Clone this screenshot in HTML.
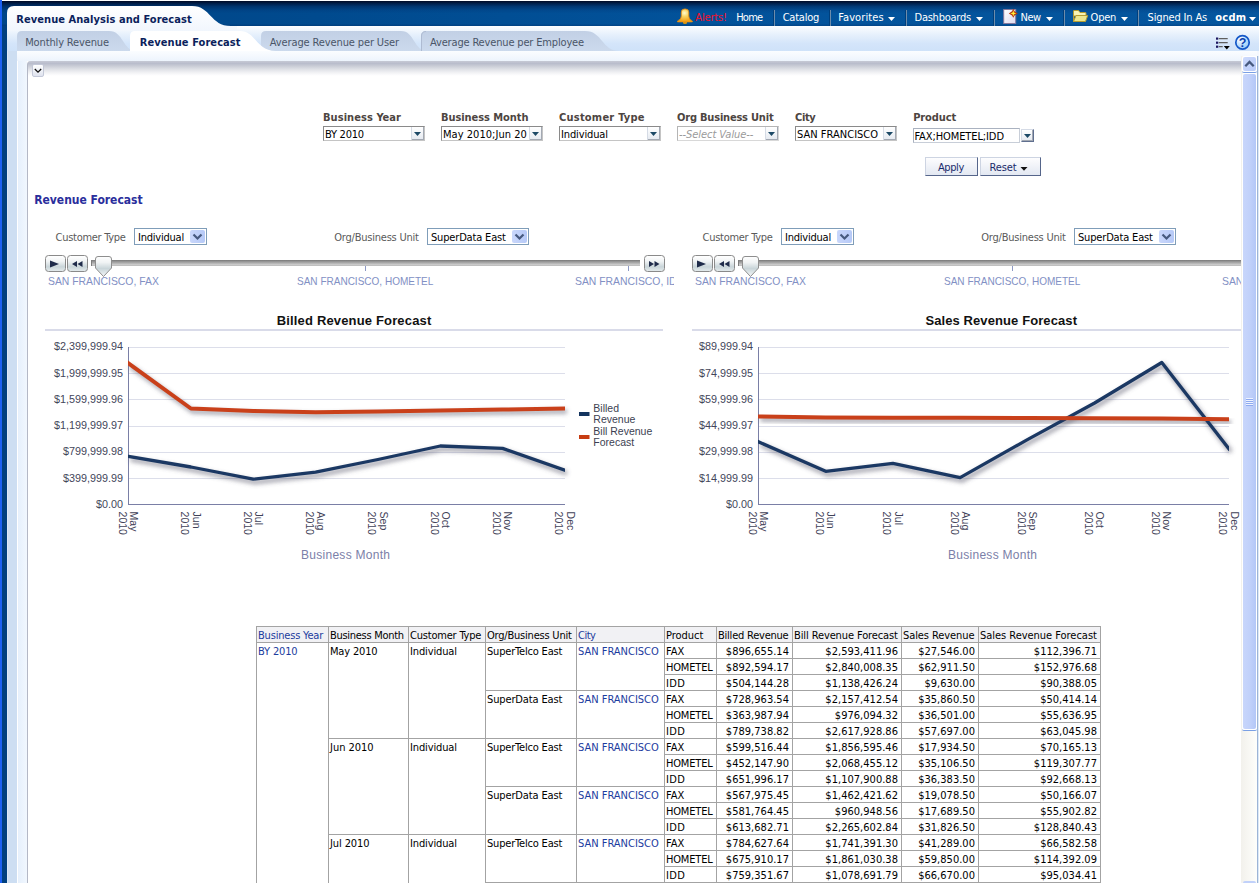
<!DOCTYPE html>
<html><head><meta charset="utf-8"><title>Revenue Analysis and Forecast</title>
<style>
*{box-sizing:border-box}
html,body{margin:0;padding:0}
body{width:1259px;height:883px;overflow:hidden;background:#fff;position:relative;font:11px "DejaVu Sans Condensed","Liberation Sans",sans-serif;color:#000}
.a{position:absolute}
.t{position:absolute;white-space:nowrap;line-height:13px;letter-spacing:-0.12px}
.ar{font-family:"Liberation Sans",sans-serif}
.nav{color:#fff;font-size:11px;top:11px}
.sep{position:absolute;top:10px;width:1px;height:16px;background:#6d8cab;box-shadow:-1px 0 0 #003f7c}
.dd{position:absolute;width:0;height:0;border-left:3.5px solid transparent;border-right:3.5px solid transparent;border-top:4px solid #fff;top:16px}
.tab{position:absolute;top:31px;height:20px}
.pl{font-weight:bold;color:#4d4541;top:111px;letter-spacing:-0.1px}
.psel{position:absolute;top:126px;height:15px;background:#fff;border:1px solid #8a8a8a;border-right-color:#c4c4c4;border-bottom-color:#c4c4c4}
.psel .tx{position:absolute;left:1px;top:1px;line-height:13px;white-space:nowrap}
.psel .bt{position:absolute;right:0;top:0;width:13px;height:13px;background:linear-gradient(#fff,#e4e9f0);border-left:1px solid #d5dbe5;box-shadow:inset -1px -1px 0 #a3a9b3}
.psel .bt svg{position:absolute;left:2px;top:5px}
.vsel{position:absolute;top:228px;height:17px;background:#fff;border:1px solid #7f9db9}
.vsel .tx{position:absolute;left:3px;top:2px;line-height:13px;white-space:nowrap;letter-spacing:-0.22px}
.vsel .bt{position:absolute;right:1px;top:1px;width:15px;height:13px;background:linear-gradient(90deg,#c9d7fb,#b6c9f7);border-radius:2px}
.vl{color:#555;top:231px}
.btn{position:absolute;top:255px;height:17px;width:21px;border:1px solid #8a8a8a;border-radius:3.5px;background:linear-gradient(#fff,#f1f4f5 35%,#c9d5d9 72%,#e3eaec)}
.tick{position:absolute;top:266px;width:1px;height:5px;background:#8d99c4}
.sl{color:#8290c4;font:10.4px "Liberation Sans",sans-serif;line-height:13px;top:275px;letter-spacing:0}
table{border-collapse:collapse;table-layout:fixed;position:absolute;left:256px;top:626px;font:11px "DejaVu Sans Condensed","Liberation Sans",sans-serif}
td{border:1px solid #a3a3a3;padding:2px 1px 0 1px;height:16px;line-height:13px;vertical-align:top;white-space:nowrap;overflow:hidden}
tr.h td{background:#f1f1f4}
td.n{text-align:right;padding-right:3px}
.lk{color:#1c3c9e}
</style></head>
<body>
<div class="a" style="left:0;top:0;width:2px;height:883px;background:#1c60f2"></div>
<div class="a" style="left:2px;top:1px;width:1257px;height:25px;background:linear-gradient(rgba(0,6,30,.95) 0,rgba(0,14,48,.72) 10%,rgba(0,22,66,.42) 22%,rgba(0,30,90,.12) 38%,rgba(0,0,0,0) 50%,rgba(0,0,0,0) 90%,rgba(0,20,70,.22) 100%),linear-gradient(90deg,#004587 0,#004a8e 25%,#02529a 55%,#05569e 100%)"></div>
<div class="a" style="left:2px;top:26px;width:5px;height:857px;background:#003f7f"></div>
<div class="a" style="left:7px;top:26px;width:1252px;height:25px;background:linear-gradient(#fff 0,#f8fbff 6%,#e6f0fc 35%,#d4e5fa 70%,#cfe2f9)"></div>
<div class="a" style="left:7px;top:51px;width:10px;height:832px;background:linear-gradient(90deg,#dce8f8 0,#dce8f8 1px,#cddef2 1px)"></div>
<div class="a" style="left:17px;top:51px;width:1242px;height:10px;background:linear-gradient(#fbfdff,#edf4fd)"></div>
<div class="a" style="left:17px;top:61px;width:10px;height:822px;background:linear-gradient(90deg,#fff 0,#fff 1px,#e6f0fc 1px,#f1f7fe)"></div>
<svg class="a" style="left:7px;top:6px" width="230" height="25" viewBox="0 0 230 25"><defs><linearGradient id="tg" x1="0" y1="0" x2="0" y2="1"><stop offset="0" stop-color="#fff"/><stop offset="1" stop-color="#f1f6fd"/></linearGradient></defs><path d="M0 25V7Q0 0 7 0H185C204 0 203 20 224 20H230V25Z" fill="url(#tg)"/></svg>
<div class="t" style="left:16.3px;top:13px;letter-spacing:0.061px;font-weight:bold;color:#0b1f5c">Revenue Analysis and Forecast</div>
<svg class="a" style="left:677px;top:8px" width="16" height="17" viewBox="0 0 16 17"><defs><radialGradient id="bg" cx=".47" cy=".32" r=".6"><stop offset="0" stop-color="#fffcd0"/><stop offset=".45" stop-color="#f9d460"/><stop offset="1" stop-color="#f2a51e"/></radialGradient></defs><path d="M6 14H10V15Q10 16 8 16Q6 16 6 15Z" fill="#d99a10"/><path d="M4.300 4Q4.300 .9 8 .9Q11.800 .9 11.800 4V8Q11.800 11.500 15.300 13V13.900H.5V13Q4.300 11.500 4.300 8Z" fill="url(#bg)" stroke="#e8890c" stroke-width=".8"/></svg>
<div class="t nav" style="left:695.3px;top:11px;letter-spacing:-0.168px;color:#f2102c">Alerts!</div>
<div class="t nav" style="left:736.2px;top:11px;letter-spacing:-0.78px;">Home</div>
<div class="t nav" style="left:782.7px;top:11px;letter-spacing:-0.237px;">Catalog</div>
<div class="t nav" style="left:838.2px;top:11px;letter-spacing:0.108px;">Favorites</div>
<div class="t nav" style="left:914.5px;top:11px;letter-spacing:-0.241px;">Dashboards</div>
<div class="t nav" style="left:1020.5px;top:11px;letter-spacing:-0.496px;">New</div>
<div class="t nav" style="left:1090.6px;top:11px;letter-spacing:-0.254px;">Open</div>
<div class="t nav" style="left:1147.6px;top:11px;letter-spacing:-0.164px;">Signed In As</div>
<div class="t nav" style="left:1215.3px;top:11px;letter-spacing:0.25px;font-weight:bold;">ocdm</div>
<div class="sep" style="left:774px"></div>
<div class="sep" style="left:830px"></div>
<div class="sep" style="left:906px"></div>
<div class="sep" style="left:994px"></div>
<div class="sep" style="left:1064px"></div>
<div class="sep" style="left:1138px"></div>
<svg class="a" style="left:888px;top:17px" width="8" height="5" viewBox="0 0 8 5"><path d="M0 0H7L3.500 4Z" fill="#fff"/></svg>
<svg class="a" style="left:976px;top:17px" width="8" height="5" viewBox="0 0 8 5"><path d="M0 0H7L3.500 4Z" fill="#fff"/></svg>
<svg class="a" style="left:1046px;top:17px" width="8" height="5" viewBox="0 0 8 5"><path d="M0 0H7L3.500 4Z" fill="#fff"/></svg>
<svg class="a" style="left:1121px;top:17px" width="8" height="5" viewBox="0 0 8 5"><path d="M0 0H7L3.500 4Z" fill="#fff"/></svg>
<svg class="a" style="left:1249px;top:17px" width="8" height="5" viewBox="0 0 8 5"><path d="M0 0H7L3.500 4Z" fill="#fff"/></svg>
<svg class="a" style="left:1003px;top:8px" width="16" height="17" viewBox="0 0 16 17"><defs><linearGradient id="ng" x1="0" y1="0" x2="1" y2="1"><stop offset="0" stop-color="#fff"/><stop offset="1" stop-color="#dcd9ee"/></linearGradient></defs><rect x=".7" y="1.500" width="12" height="14" fill="url(#ng)" stroke="#85789c" stroke-width="1"/><path d="M10.300 .8L11.600 3.200L14.800 5.400L11.600 7.600L10.300 9.800L9 7.600L5.800 5.400L9 3.200Z" fill="#b5380c"/><path d="M10.300 2.200L11 4.600L13.200 5.400L11 6.200L10.300 8.600L9.600 6.200L7.400 5.400L9.600 4.600Z" fill="#ffee3a"/></svg>
<svg class="a" style="left:1072px;top:9px" width="17" height="14" viewBox="0 0 17 14"><path d="M1.500 12.500V2Q1.500 1.500 2 1.500H6.500L8 3.500H13.500Q14 3.500 14 4V7H1.500Z" fill="#f7f3b4" stroke="#b59c30" stroke-width="1"/><path d="M1.500 12.500L4 6.500H15.700L13.500 12.500Z" fill="#ebe68e" stroke="#b59c30" stroke-width="1" stroke-linejoin="round"/></svg>
<svg class="a" style="left:17px;top:31px" width="1100" height="20" viewBox="0 0 1100 20"><defs><linearGradient id="ig" x1="0" y1="0" x2="0" y2="1"><stop offset="0" stop-color="#c2d0e5"/><stop offset="1" stop-color="#ccdaed"/></linearGradient></defs><path d="M0 20V5Q0 0 5 0H92C107 0 105 20 120 20Z" fill="url(#ig)"/><path d="M244 20V5Q244 0 249 0H384C398 0 396 20 411 20Z" fill="url(#ig)"/><path d="M404 20V5Q404 0 409 0H568C586 0 584 20 603 20Z" fill="url(#ig)"/><path d="M404.500 20V5Q404.500 .5 409 .5" fill="none" stroke="#aebbd2" stroke-width="1"/><path d="M113 20V5Q113 0 118 0H223C239 0 239 20 259 20Z" fill="#fff"/></svg>
<div class="t" style="left:25.2px;top:36px;letter-spacing:-0.138px;color:#4a5568">Monthly Revenue</div>
<div class="t" style="left:139.8px;top:36px;letter-spacing:0.074px;font-weight:bold;color:#0b1f5c">Revenue Forecast</div>
<div class="t" style="left:269.8px;top:36px;letter-spacing:-0.121px;color:#4a5568">Average Revenue per User</div>
<div class="t" style="left:430px;top:36px;letter-spacing:-0.164px;color:#4a5568">Average Revenue per Employee</div>
<svg class="a" style="left:1215px;top:36px" width="16" height="15" viewBox="0 0 16 15"><g stroke="#5f5f5f" stroke-width="1.3"><path d="M3.700 2.600H12.700M3.700 6.700H12.700M3.700 10.700H7.700"/></g><g fill="#1c1660"><rect x="1" y="1.500" width="2.200" height="2.200"/><rect x="1" y="5.600" width="2.200" height="2.200"/><rect x="1" y="9.600" width="2.200" height="2.200"/></g><path d="M8.800 10H14.800L11.800 13.600Z" fill="#000"/></svg>
<svg class="a" style="left:1234px;top:34px" width="17" height="17" viewBox="0 0 17 17"><defs><radialGradient id="hg" cx=".32" cy=".28" r=".85"><stop offset="0" stop-color="#fff"/><stop offset=".45" stop-color="#c4e2fd"/><stop offset="1" stop-color="#8cc4f8"/></radialGradient></defs><circle cx="8.500" cy="8.400" r="6.700" fill="url(#hg)" stroke="#1457c8" stroke-width="1.700"/><text x="8.600" y="12.800" text-anchor="middle" font-family="Liberation Sans,sans-serif" font-weight="bold" font-size="12.500" fill="#0a3fae">?</text></svg>
<div class="a" style="left:27px;top:61px;width:1214px;height:822px;background:linear-gradient(#c6c9d5 0,#b9bdcc 2.5px,#c9ccd6 5px,#dddfe5 8px,#eeeff2 11px,#fcfcfd 14px,#fff 15px);border-left:1px solid #b4b8c6;border-top-left-radius:4px"></div>
<div class="a" style="left:32px;top:64px;width:12px;height:13px;border-radius:2px;background:linear-gradient(#fff,#dfe3ee);border:1px solid #c3c8d8"></div>
<svg class="a" style="left:34px;top:68px" width="8" height="6" viewBox="0 0 8 6"><path d="M.8 1L4 4.2L7.2 1" stroke="#111" stroke-width="1.3" fill="none"/></svg>
<div class="a" style="left:1241px;top:56px;width:16px;height:827px;background:linear-gradient(90deg,#f2f1ec,#fefefb)"></div>
<div class="a" style="left:1257px;top:51px;width:2px;height:5px;background:#f4f8fe"></div>
<div class="a" style="left:1257px;top:56px;width:2px;height:827px;background:linear-gradient(90deg,#9db4d6 0,#9db4d6 50%,#dce9f7 50%)"></div>
<div class="a" style="left:1242px;top:56px;width:15px;height:17px;background:#fff;border-radius:2px;border-bottom:1px solid #7aa0e4"></div>
<div class="a" style="left:1243px;top:57px;width:13px;height:14px;border-radius:2px;background:linear-gradient(135deg,#cddafc,#b8caf8)"></div>
<svg class="a" style="left:1244px;top:60px" width="11" height="8" viewBox="0 0 11 8"><path d="M1.300 6.200L5.500 2L9.700 6.200" stroke="#46597e" stroke-width="2.300" fill="none"/></svg>
<div class="a" style="left:1242px;top:73px;width:15px;height:658px;background:#fff;border-radius:2px;border-bottom:1px solid #7aa0e4"></div>
<div class="a" style="left:1243px;top:74px;width:13px;height:655px;border-radius:2px;background:linear-gradient(90deg,#c8d6fb,#c1d1fa 50%,#b3c7f7)"></div>
<div class="a" style="left:1246px;top:398px;width:7px;height:8px;background:repeating-linear-gradient(#eef3ff 0,#eef3ff 1px,#8eaaf0 1px,#8eaaf0 2px)"></div>
<div class="a" style="left:1243px;top:881px;width:13px;height:2px;background:#c1d1fa;border-radius:2px 2px 0 0"></div>
<div class="t" style="left:323px;top:111px;letter-spacing:0.058px;font-weight:bold;color:#4d4541">Business Year</div>
<div class="psel" style="left:323px;width:102px"><div class="tx" style="letter-spacing:-0.259px">BY 2010</div><div class="bt"><svg width="8" height="5" viewBox="0 0 8 5"><path d="M0 0H7L3.500 4Z" fill="#1c4966"/></svg></div></div>
<div class="t" style="left:441px;top:111px;letter-spacing:-0.068px;font-weight:bold;color:#4d4541">Business Month</div>
<div class="psel" style="left:441px;width:102px"><div class="tx" style="letter-spacing:0.035px">May 2010;Jun 20</div><div class="bt"><svg width="8" height="5" viewBox="0 0 8 5"><path d="M0 0H7L3.500 4Z" fill="#1c4966"/></svg></div></div>
<div class="t" style="left:559px;top:111px;letter-spacing:0.228px;font-weight:bold;color:#4d4541">Customer Type</div>
<div class="psel" style="left:559px;width:102px"><div class="tx" style="letter-spacing:-0.128px">Individual</div><div class="bt"><svg width="8" height="5" viewBox="0 0 8 5"><path d="M0 0H7L3.500 4Z" fill="#1c4966"/></svg></div></div>
<div class="t" style="left:677px;top:111px;letter-spacing:-0.203px;font-weight:bold;color:#4d4541">Org Business Unit</div>
<div class="psel" style="left:677px;width:102px;border-color:#b5b5b5 #d8d8d8 #d8d8d8 #b5b5b5"><div class="tx" style="font-style:italic;color:#9a9a9a;letter-spacing:-0.052px">--Select Value--</div><div class="bt"><svg width="8" height="5" viewBox="0 0 8 5"><path d="M0 0H7L3.500 4Z" fill="#1c4966"/></svg></div></div>
<div class="t" style="left:795px;top:111px;letter-spacing:-0.361px;font-weight:bold;color:#4d4541">City</div>
<div class="psel" style="left:795px;width:102px"><div class="tx" style="letter-spacing:0.015px">SAN FRANCISCO</div><div class="bt"><svg width="8" height="5" viewBox="0 0 8 5"><path d="M0 0H7L3.500 4Z" fill="#1c4966"/></svg></div></div>
<div class="t" style="left:913.2px;top:111px;letter-spacing:-0.122px;font-weight:bold;color:#4d4541">Product</div>
<div class="psel" style="left:913px;top:128px;width:107px;height:15px;border-color:#aab2c0 #c8ced8 #c8ced8 #aab2c0"><div class="tx" style="left:0.5px;letter-spacing:-0.098px">FAX;HOMETEL;IDD</div></div>
<div class="psel" style="left:1021px;top:129px;width:13px;height:13px;border:1px solid;border-color:#d5dbe6 #5f6f8f #5f6f8f #d5dbe6"><div class="bt" style="width:11px;height:11px;border:0"><svg style="left:2px;top:4px" width="8" height="5" viewBox="0 0 8 5"><path d="M0 0H7L3.500 4Z" fill="#1c4966"/></svg></div></div>
<div class="a" style="left:925px;top:157px;width:53px;height:19px;background:linear-gradient(#fdfdfe,#e3e8f2);border:1px solid #cdd4e2;border-right-color:#55658a;border-bottom-color:#55658a"></div>
<div class="t" style="left:938px;top:161px;letter-spacing:-0.421px;color:#1a2b6b">Apply</div>
<div class="a" style="left:980px;top:157px;width:61px;height:19px;background:linear-gradient(#fdfdfe,#e3e8f2);border:1px solid #cdd4e2;border-right-color:#55658a;border-bottom-color:#55658a"></div>
<div class="t" style="left:989.5px;top:161px;letter-spacing:-0.105px;color:#1a2b6b">Reset</div>
<svg class="a" style="left:1020px;top:167px" width="9" height="5" viewBox="0 0 9 5"><path d="M.5 0H7.500L4 3.800Z" fill="#111"/></svg>
<div class="t" style="left:34.2px;top:193px;letter-spacing:-0.015px;font-weight:bold;font-size:12px;line-height:15px;color:#2a2e9c">Revenue Forecast</div>
<div class="a" style="left:45px;top:220px;width:630px;height:360px;overflow:hidden">
<div class="t" style="left:10.6px;top:11px;letter-spacing:-0.29px;color:#5a5a5a">Customer Type</div>
<div class="vsel" style="left:89px;top:8px;width:73px"><div class="tx" style="letter-spacing:-0.228px">Individual</div><div class="bt"></div><svg class="a" style="right:3px;top:4px" width="11" height="8" viewBox="0 0 11 8"><path d="M1.500 1.500L5.500 5.500L9.500 1.500" stroke="#46597e" stroke-width="2.200" fill="none"/></svg></div>
<div class="t" style="left:289.3px;top:11px;letter-spacing:-0.227px;color:#5a5a5a">Org/Business Unit</div>
<div class="vsel" style="left:382px;top:8px;width:102px"><div class="tx" style="letter-spacing:-0.172px">SuperData East</div><div class="bt"></div><svg class="a" style="right:3px;top:4px" width="11" height="8" viewBox="0 0 11 8"><path d="M1.500 1.500L5.500 5.500L9.500 1.500" stroke="#46597e" stroke-width="2.200" fill="none"/></svg></div>
<div class="btn" style="left:0px;top:35px"></div><svg class="a" style="left:5px;top:40px" width="10" height="8" viewBox="0 0 10 8"><path d="M0 .5L9 4L0 7.5Z" fill="#1f2b4a"/></svg>
<div class="btn" style="left:22px;top:35px"></div><svg class="a" style="left:27px;top:41px" width="11" height="6" viewBox="0 0 11 6"><path d="M5 0V6L0 3ZM10.5 0V6L5.5 3Z" fill="#1f2b4a"/></svg>
<div class="a" style="left:46px;top:40px;width:549px;height:6px;background:linear-gradient(#777 0,#8e8e8e 18%,#a9a9a9 45%,#cfcfcf 80%,#b5b5b5);border-left:1px solid #7d7d7d"></div>
<div class="btn" style="left:599px;top:35px"></div><svg class="a" style="left:604px;top:41px" width="11" height="6" viewBox="0 0 11 6"><path d="M0 0V6L5 3ZM5.5 0V6L10.5 3Z" fill="#1f2b4a"/></svg>
<svg class="a" style="left:49px;top:35px" width="20" height="23" viewBox="0 0 20 23"><defs><linearGradient id="th45" x1="0" y1="0" x2="0" y2="1"><stop offset="0" stop-color="#fff"/><stop offset=".3" stop-color="#f0f3f4"/><stop offset=".6" stop-color="#c9d5d9"/><stop offset="1" stop-color="#f4f7f8"/></linearGradient></defs><path d="M1.5 4Q1.5 1.5 4 1.5H15Q17.500 1.5 17.500 4V13L9.500 21.500L1.5 13Z" fill="url(#th45)" stroke="#8e8e8e" stroke-width="1"/></svg>
<div class="tick" style="left:320px;top:46px"></div>
<div class="tick" style="left:583px;top:46px"></div>
<div class="t sl" style="left:3px;top:55px;font-size:10.4px">SAN FRANCISCO, FAX</div>
<div class="t sl" style="left:252px;top:55px;font-size:10.03px">SAN FRANCISCO, HOMETEL</div>
<div class="a" style="left:530px;top:55px;width:99px;height:14px;overflow:hidden"><div class="t sl" style="left:0;top:0;font-size:10.4px">SAN FRANCISCO, IDD</div></div>
</div>
<div class="a" style="left:692px;top:220px;width:549px;height:360px;overflow:hidden">
<div class="t" style="left:10.6px;top:11px;letter-spacing:-0.29px;color:#5a5a5a">Customer Type</div>
<div class="vsel" style="left:89px;top:8px;width:73px"><div class="tx" style="letter-spacing:-0.228px">Individual</div><div class="bt"></div><svg class="a" style="right:3px;top:4px" width="11" height="8" viewBox="0 0 11 8"><path d="M1.500 1.500L5.500 5.500L9.500 1.500" stroke="#46597e" stroke-width="2.200" fill="none"/></svg></div>
<div class="t" style="left:289.3px;top:11px;letter-spacing:-0.227px;color:#5a5a5a">Org/Business Unit</div>
<div class="vsel" style="left:382px;top:8px;width:102px"><div class="tx" style="letter-spacing:-0.172px">SuperData East</div><div class="bt"></div><svg class="a" style="right:3px;top:4px" width="11" height="8" viewBox="0 0 11 8"><path d="M1.500 1.500L5.500 5.500L9.500 1.500" stroke="#46597e" stroke-width="2.200" fill="none"/></svg></div>
<div class="btn" style="left:0px;top:35px"></div><svg class="a" style="left:5px;top:40px" width="10" height="8" viewBox="0 0 10 8"><path d="M0 .5L9 4L0 7.5Z" fill="#1f2b4a"/></svg>
<div class="btn" style="left:22px;top:35px"></div><svg class="a" style="left:27px;top:41px" width="11" height="6" viewBox="0 0 11 6"><path d="M5 0V6L0 3ZM10.5 0V6L5.5 3Z" fill="#1f2b4a"/></svg>
<div class="a" style="left:46px;top:40px;width:549px;height:6px;background:linear-gradient(#777 0,#8e8e8e 18%,#a9a9a9 45%,#cfcfcf 80%,#b5b5b5);border-left:1px solid #7d7d7d"></div>
<div class="btn" style="left:599px;top:35px"></div><svg class="a" style="left:604px;top:41px" width="11" height="6" viewBox="0 0 11 6"><path d="M0 0V6L5 3ZM5.5 0V6L10.5 3Z" fill="#1f2b4a"/></svg>
<svg class="a" style="left:49px;top:35px" width="20" height="23" viewBox="0 0 20 23"><defs><linearGradient id="th692" x1="0" y1="0" x2="0" y2="1"><stop offset="0" stop-color="#fff"/><stop offset=".3" stop-color="#f0f3f4"/><stop offset=".6" stop-color="#c9d5d9"/><stop offset="1" stop-color="#f4f7f8"/></linearGradient></defs><path d="M1.5 4Q1.5 1.5 4 1.5H15Q17.500 1.5 17.500 4V13L9.500 21.500L1.5 13Z" fill="url(#th692)" stroke="#8e8e8e" stroke-width="1"/></svg>
<div class="tick" style="left:320px;top:46px"></div>
<div class="tick" style="left:583px;top:46px"></div>
<div class="t sl" style="left:3px;top:55px;font-size:10.4px">SAN FRANCISCO, FAX</div>
<div class="t sl" style="left:252px;top:55px;font-size:10.03px">SAN FRANCISCO, HOMETEL</div>
<div class="a" style="left:530px;top:55px;width:99px;height:14px;overflow:hidden"><div class="t sl" style="left:0;top:0;font-size:10.4px">SAN FRANCISCO, IDD</div></div>
</div>
<svg class="a" style="left:45px;top:305px" width="630" height="275" viewBox="0 0 630 275" font-family="Liberation Sans,sans-serif"><defs><filter id="sh45" x="-5%" y="-20%" width="110%" height="150%"><feGaussianBlur stdDeviation="2.1"/></filter><clipPath id="cp45"><rect x="83" y="30" width="437" height="180"/></clipPath></defs><text x="309" y="19.5" font-size="13" font-weight="bold" fill="#111" text-anchor="middle" textLength="154.5" lengthAdjust="spacing">Billed Revenue Forecast</text><rect x="0" y="24" width="618" height="2" fill="#d9dbe9"/><rect x="83" y="42" width="437" height="1" fill="#dcdeea"/><text x="78.1" y="45.2" font-size="10.8" fill="#43465a" text-anchor="end">$2,399,999.94</text><rect x="83" y="68" width="437" height="1" fill="#dcdeea"/><text x="78.1" y="72.0" font-size="10.8" fill="#43465a" text-anchor="end">$1,999,999.95</text><rect x="83" y="94" width="437" height="1" fill="#dcdeea"/><text x="78.1" y="97.8" font-size="10.8" fill="#43465a" text-anchor="end">$1,599,999.96</text><rect x="83" y="121" width="437" height="1" fill="#dcdeea"/><text x="78.1" y="124.2" font-size="10.8" fill="#43465a" text-anchor="end">$1,199,999.97</text><rect x="83" y="147" width="437" height="1" fill="#dcdeea"/><text x="78.1" y="150.2" font-size="10.8" fill="#43465a" text-anchor="end">$799,999.98</text><rect x="83" y="173" width="437" height="1" fill="#dcdeea"/><text x="78.1" y="177.0" font-size="10.8" fill="#43465a" text-anchor="end">$399,999.99</text><rect x="83" y="199" width="437" height="1" fill="#7a7fa6"/><text x="78.1" y="203.2" font-size="10.8" fill="#43465a" text-anchor="end">$0.00</text><rect x="83" y="42" width="1" height="158" fill="#7a7fa6"/><polyline points="85.5,61.4 147.9,106.5 210.2,109.0 272.6,110.3 334.9,109.5 397.3,108.5 459.6,107.5 522.0,106.5" fill="none" stroke="#55556a" stroke-opacity=".5" stroke-width="4.6" filter="url(#sh45)"/><polyline points="85.5,154.4 147.9,165.0 210.2,177.2 272.6,170.2 334.9,157.5 397.3,144.0 459.6,146.4 522.0,168.3" fill="none" stroke="#55556a" stroke-opacity=".5" stroke-width="4.6" filter="url(#sh45)"/><polyline points="83.5,151.4 145.9,162.0 208.2,174.2 270.6,167.2 332.9,154.5 395.3,141.0 457.6,143.4 520.0,165.3" fill="none" stroke="#1b3863" stroke-width="3.3" stroke-linejoin="round" stroke-linecap="square" clip-path="url(#cp45)"/><polyline points="83.5,58.4 145.9,103.5 208.2,106.0 270.6,107.3 332.9,106.5 395.3,105.5 457.6,104.5 520.0,103.5" fill="none" stroke="#c9401a" stroke-width="4" stroke-linejoin="round" stroke-linecap="square" clip-path="url(#cp45)"/><text transform="translate(85.1,206.60000000000002) rotate(90)" font-size="10.5" fill="#3f4258"><tspan x="0" y="0">May</tspan><tspan x="0" y="11.2">2010</tspan></text><text transform="translate(147.5,206.60000000000002) rotate(90)" font-size="10.5" fill="#3f4258"><tspan x="0" y="0">Jun</tspan><tspan x="0" y="11.2">2010</tspan></text><text transform="translate(209.8,206.60000000000002) rotate(90)" font-size="10.5" fill="#3f4258"><tspan x="0" y="0">Jul</tspan><tspan x="0" y="11.2">2010</tspan></text><text transform="translate(272.2,206.60000000000002) rotate(90)" font-size="10.5" fill="#3f4258"><tspan x="0" y="0">Aug</tspan><tspan x="0" y="11.2">2010</tspan></text><text transform="translate(334.5,206.60000000000002) rotate(90)" font-size="10.5" fill="#3f4258"><tspan x="0" y="0">Sep</tspan><tspan x="0" y="11.2">2010</tspan></text><text transform="translate(396.9,206.60000000000002) rotate(90)" font-size="10.5" fill="#3f4258"><tspan x="0" y="0">Oct</tspan><tspan x="0" y="11.2">2010</tspan></text><text transform="translate(459.2,206.60000000000002) rotate(90)" font-size="10.5" fill="#3f4258"><tspan x="0" y="0">Nov</tspan><tspan x="0" y="11.2">2010</tspan></text><text transform="translate(521.6,206.60000000000002) rotate(90)" font-size="10.5" fill="#3f4258"><tspan x="0" y="0">Dec</tspan><tspan x="0" y="11.2">2010</tspan></text><text x="300.5" y="253.5" font-size="12" fill="#7b80a8" text-anchor="middle" textLength="89" lengthAdjust="spacing">Business Month</text><rect x="534" y="107" width="10.5" height="4" fill="#14345f"/><rect x="534" y="130" width="10.5" height="4" fill="#c73c12"/><text font-size="10.5" fill="#3c3f52"><tspan x="548.3" y="106.5">Billed</tspan><tspan x="548.3" y="117.5">Revenue</tspan><tspan x="548.3" y="129.5">Bill Revenue</tspan><tspan x="548.3" y="140.5">Forecast</tspan></text></svg>
<svg class="a" style="left:692px;top:305px" width="549" height="275" viewBox="0 0 549 275" font-family="Liberation Sans,sans-serif"><defs><filter id="sh692" x="-5%" y="-20%" width="110%" height="150%"><feGaussianBlur stdDeviation="2.1"/></filter><clipPath id="cp692"><rect x="66" y="30" width="471" height="180"/></clipPath></defs><text x="309.20000000000005" y="19.5" font-size="13" font-weight="bold" fill="#111" text-anchor="middle" textLength="151.6" lengthAdjust="spacing">Sales Revenue Forecast</text><rect x="0" y="24" width="549" height="2" fill="#d9dbe9"/><rect x="66" y="42" width="471" height="1" fill="#dcdeea"/><text x="61.1" y="45.2" font-size="10.8" fill="#43465a" text-anchor="end">$89,999.94</text><rect x="66" y="68" width="471" height="1" fill="#dcdeea"/><text x="61.1" y="72.0" font-size="10.8" fill="#43465a" text-anchor="end">$74,999.95</text><rect x="66" y="94" width="471" height="1" fill="#dcdeea"/><text x="61.1" y="97.8" font-size="10.8" fill="#43465a" text-anchor="end">$59,999.96</text><rect x="66" y="121" width="471" height="1" fill="#dcdeea"/><text x="61.1" y="124.2" font-size="10.8" fill="#43465a" text-anchor="end">$44,999.97</text><rect x="66" y="147" width="471" height="1" fill="#dcdeea"/><text x="61.1" y="150.2" font-size="10.8" fill="#43465a" text-anchor="end">$29,999.98</text><rect x="66" y="173" width="471" height="1" fill="#dcdeea"/><text x="61.1" y="177.0" font-size="10.8" fill="#43465a" text-anchor="end">$14,999.99</text><rect x="66" y="199" width="471" height="1" fill="#7a7fa6"/><text x="61.1" y="203.2" font-size="10.8" fill="#43465a" text-anchor="end">$0.00</text><rect x="66" y="42" width="1" height="158" fill="#7a7fa6"/><polyline points="68.5,114.4 135.7,115.5 202.9,115.7 270.1,115.8 337.4,116.0 404.6,116.2 471.8,116.4 539.0,117.3" fill="none" stroke="#55556a" stroke-opacity=".5" stroke-width="4.6" filter="url(#sh692)"/><polyline points="68.5,139.8 135.7,169.3 202.9,161.3 270.1,175.6 337.4,137.6 404.6,101.0 471.8,60.5 539.0,147.0" fill="none" stroke="#55556a" stroke-opacity=".5" stroke-width="4.6" filter="url(#sh692)"/><polyline points="66.5,136.8 133.7,166.3 200.9,158.3 268.1,172.6 335.4,134.6 402.6,98.0 469.8,57.5 537.0,144.0" fill="none" stroke="#1b3863" stroke-width="3.3" stroke-linejoin="round" stroke-linecap="square" clip-path="url(#cp692)"/><polyline points="66.5,111.4 133.7,112.5 200.9,112.7 268.1,112.8 335.4,113.0 402.6,113.2 469.8,113.4 537.0,114.3" fill="none" stroke="#c9401a" stroke-width="4" stroke-linejoin="round" stroke-linecap="square" clip-path="url(#cp692)"/><text transform="translate(68.1,206.60000000000002) rotate(90)" font-size="10.5" fill="#3f4258"><tspan x="0" y="0">May</tspan><tspan x="0" y="11.2">2010</tspan></text><text transform="translate(135.3,206.60000000000002) rotate(90)" font-size="10.5" fill="#3f4258"><tspan x="0" y="0">Jun</tspan><tspan x="0" y="11.2">2010</tspan></text><text transform="translate(202.5,206.60000000000002) rotate(90)" font-size="10.5" fill="#3f4258"><tspan x="0" y="0">Jul</tspan><tspan x="0" y="11.2">2010</tspan></text><text transform="translate(269.7,206.60000000000002) rotate(90)" font-size="10.5" fill="#3f4258"><tspan x="0" y="0">Aug</tspan><tspan x="0" y="11.2">2010</tspan></text><text transform="translate(337.0,206.60000000000002) rotate(90)" font-size="10.5" fill="#3f4258"><tspan x="0" y="0">Sep</tspan><tspan x="0" y="11.2">2010</tspan></text><text transform="translate(404.2,206.60000000000002) rotate(90)" font-size="10.5" fill="#3f4258"><tspan x="0" y="0">Oct</tspan><tspan x="0" y="11.2">2010</tspan></text><text transform="translate(471.4,206.60000000000002) rotate(90)" font-size="10.5" fill="#3f4258"><tspan x="0" y="0">Nov</tspan><tspan x="0" y="11.2">2010</tspan></text><text transform="translate(538.6,206.60000000000002) rotate(90)" font-size="10.5" fill="#3f4258"><tspan x="0" y="0">Dec</tspan><tspan x="0" y="11.2">2010</tspan></text><text x="300.5" y="253.5" font-size="12" fill="#7b80a8" text-anchor="middle" textLength="89" lengthAdjust="spacing">Business Month</text></svg>
<table><colgroup><col style="width:72px"><col style="width:80px"><col style="width:77px"><col style="width:91px"><col style="width:88px"><col style="width:52px"><col style="width:76px"><col style="width:109px"><col style="width:77px"><col style="width:122px"></colgroup><tr class="h"><td class=lk><span style="letter-spacing:-0.194px">Business Year</span></td><td><span style="letter-spacing:-0.287px">Business Month</span></td><td><span style="letter-spacing:-0.198px">Customer Type</span></td><td><span style="letter-spacing:-0.209px">Org/Business Unit</span></td><td class=lk><span style="letter-spacing:-0.514px">City</span></td><td><span style="letter-spacing:-0.042px">Product</span></td><td><span style="letter-spacing:-0.225px">Billed Revenue</span></td><td><span style="letter-spacing:-0.11px">Bill Revenue Forecast</span></td><td><span style="letter-spacing:-0.079px">Sales Revenue</span></td><td><span style="letter-spacing:-0.029px">Sales Revenue Forecast</span></td></tr><tr><td class="lk" rowspan="15" style="border-bottom:none"><span style="letter-spacing:-0.159px">BY 2010</span></td><td rowspan="6"><span style="letter-spacing:-0.169px">May 2010</span></td><td rowspan="6"><span style="letter-spacing:-0.139px">Individual</span></td><td rowspan="3"><span style="letter-spacing:-0.187px">SuperTelco East</span></td><td class="lk" rowspan="3"><span style="letter-spacing:-0.01px">SAN FRANCISCO</span></td><td><span style="letter-spacing:0.024px">FAX</span></td><td class="n"><span style="letter-spacing:0.02px">$896,655.14</span></td><td class="n"><span style="letter-spacing:0.02px">$2,593,411.96</span></td><td class="n"><span style="letter-spacing:0.02px">$27,546.00</span></td><td class="n"><span style="letter-spacing:0.02px">$112,396.71</span></td></tr><tr><td><span style="letter-spacing:-0.186px">HOMETEL</span></td><td class="n"><span style="letter-spacing:0.02px">$892,594.17</span></td><td class="n"><span style="letter-spacing:0.02px">$2,840,008.35</span></td><td class="n"><span style="letter-spacing:0.02px">$62,911.50</span></td><td class="n"><span style="letter-spacing:0.02px">$152,976.68</span></td></tr><tr><td><span style="letter-spacing:0.331px">IDD</span></td><td class="n"><span style="letter-spacing:0.02px">$504,144.28</span></td><td class="n"><span style="letter-spacing:0.02px">$1,138,426.24</span></td><td class="n"><span style="letter-spacing:0.02px">$9,630.00</span></td><td class="n"><span style="letter-spacing:0.02px">$90,388.05</span></td></tr><tr><td rowspan="3"><span style="letter-spacing:-0.134px">SuperData East</span></td><td class="lk" rowspan="3"><span style="letter-spacing:-0.01px">SAN FRANCISCO</span></td><td><span style="letter-spacing:0.024px">FAX</span></td><td class="n"><span style="letter-spacing:0.02px">$728,963.54</span></td><td class="n"><span style="letter-spacing:0.02px">$2,157,412.54</span></td><td class="n"><span style="letter-spacing:0.02px">$35,860.50</span></td><td class="n"><span style="letter-spacing:0.02px">$50,414.14</span></td></tr><tr><td><span style="letter-spacing:-0.186px">HOMETEL</span></td><td class="n"><span style="letter-spacing:0.02px">$363,987.94</span></td><td class="n"><span style="letter-spacing:0.02px">$976,094.32</span></td><td class="n"><span style="letter-spacing:0.02px">$36,501.00</span></td><td class="n"><span style="letter-spacing:0.02px">$55,636.95</span></td></tr><tr><td><span style="letter-spacing:0.331px">IDD</span></td><td class="n"><span style="letter-spacing:0.02px">$789,738.82</span></td><td class="n"><span style="letter-spacing:0.02px">$2,617,928.86</span></td><td class="n"><span style="letter-spacing:0.02px">$57,697.00</span></td><td class="n"><span style="letter-spacing:0.02px">$63,045.98</span></td></tr><tr><td rowspan="6"><span style="letter-spacing:-0.027px">Jun 2010</span></td><td rowspan="6"><span style="letter-spacing:-0.139px">Individual</span></td><td rowspan="3"><span style="letter-spacing:-0.187px">SuperTelco East</span></td><td class="lk" rowspan="3"><span style="letter-spacing:-0.01px">SAN FRANCISCO</span></td><td><span style="letter-spacing:0.024px">FAX</span></td><td class="n"><span style="letter-spacing:0.02px">$599,516.44</span></td><td class="n"><span style="letter-spacing:0.02px">$1,856,595.46</span></td><td class="n"><span style="letter-spacing:0.02px">$17,934.50</span></td><td class="n"><span style="letter-spacing:0.02px">$70,165.13</span></td></tr><tr><td><span style="letter-spacing:-0.186px">HOMETEL</span></td><td class="n"><span style="letter-spacing:0.02px">$452,147.90</span></td><td class="n"><span style="letter-spacing:0.02px">$2,068,455.12</span></td><td class="n"><span style="letter-spacing:0.02px">$35,106.50</span></td><td class="n"><span style="letter-spacing:0.02px">$119,307.77</span></td></tr><tr><td><span style="letter-spacing:0.331px">IDD</span></td><td class="n"><span style="letter-spacing:0.02px">$651,996.17</span></td><td class="n"><span style="letter-spacing:0.02px">$1,107,900.88</span></td><td class="n"><span style="letter-spacing:0.02px">$36,383.50</span></td><td class="n"><span style="letter-spacing:0.02px">$92,668.13</span></td></tr><tr><td rowspan="3"><span style="letter-spacing:-0.134px">SuperData East</span></td><td class="lk" rowspan="3"><span style="letter-spacing:-0.01px">SAN FRANCISCO</span></td><td><span style="letter-spacing:0.024px">FAX</span></td><td class="n"><span style="letter-spacing:0.02px">$567,975.45</span></td><td class="n"><span style="letter-spacing:0.02px">$1,462,421.62</span></td><td class="n"><span style="letter-spacing:0.02px">$19,078.50</span></td><td class="n"><span style="letter-spacing:0.02px">$50,166.07</span></td></tr><tr><td><span style="letter-spacing:-0.186px">HOMETEL</span></td><td class="n"><span style="letter-spacing:0.02px">$581,764.45</span></td><td class="n"><span style="letter-spacing:0.02px">$960,948.56</span></td><td class="n"><span style="letter-spacing:0.02px">$17,689.50</span></td><td class="n"><span style="letter-spacing:0.02px">$55,902.82</span></td></tr><tr><td><span style="letter-spacing:0.331px">IDD</span></td><td class="n"><span style="letter-spacing:0.02px">$613,682.71</span></td><td class="n"><span style="letter-spacing:0.02px">$2,265,602.84</span></td><td class="n"><span style="letter-spacing:0.02px">$31,826.50</span></td><td class="n"><span style="letter-spacing:0.02px">$128,840.43</span></td></tr><tr><td rowspan="3" style="border-bottom:none"><span style="letter-spacing:-0.11px">Jul 2010</span></td><td rowspan="3" style="border-bottom:none"><span style="letter-spacing:-0.139px">Individual</span></td><td rowspan="3"><span style="letter-spacing:-0.187px">SuperTelco East</span></td><td class="lk" rowspan="3"><span style="letter-spacing:-0.01px">SAN FRANCISCO</span></td><td><span style="letter-spacing:0.024px">FAX</span></td><td class="n"><span style="letter-spacing:0.02px">$784,627.64</span></td><td class="n"><span style="letter-spacing:0.02px">$1,741,391.30</span></td><td class="n"><span style="letter-spacing:0.02px">$41,289.00</span></td><td class="n"><span style="letter-spacing:0.02px">$66,582.58</span></td></tr><tr><td><span style="letter-spacing:-0.186px">HOMETEL</span></td><td class="n"><span style="letter-spacing:0.02px">$675,910.17</span></td><td class="n"><span style="letter-spacing:0.02px">$1,861,030.38</span></td><td class="n"><span style="letter-spacing:0.02px">$59,850.00</span></td><td class="n"><span style="letter-spacing:0.02px">$114,392.09</span></td></tr><tr><td><span style="letter-spacing:0.331px">IDD</span></td><td class="n"><span style="letter-spacing:0.02px">$759,351.67</span></td><td class="n"><span style="letter-spacing:0.02px">$1,078,691.79</span></td><td class="n"><span style="letter-spacing:0.02px">$66,670.00</span></td><td class="n"><span style="letter-spacing:0.02px">$95,034.41</span></td></tr></table>
</body></html>
